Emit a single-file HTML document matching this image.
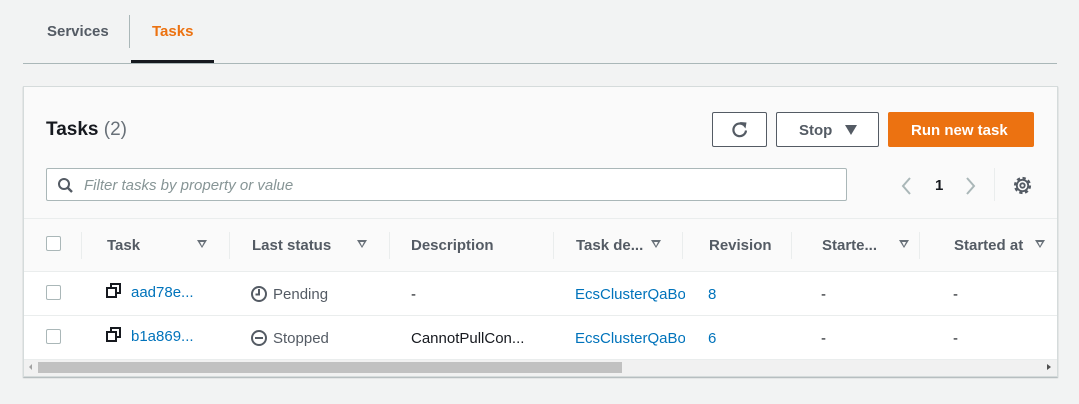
<!DOCTYPE html>
<html><head><style>
*{box-sizing:border-box;margin:0;padding:0}
body{width:1079px;height:404px;background:#f2f3f3;font-family:"Liberation Sans",sans-serif;position:relative;overflow:hidden;color:#16191f}
.a{position:absolute}
.b{font-weight:bold}
.hd{font-size:15px;font-weight:bold;color:#545b64;top:237px}
.tri{width:0;height:0;border-left:5px solid transparent;border-right:5px solid transparent;border-top:8px solid #687078;top:240px}
.tri:after{content:"";position:absolute;left:-2.5px;top:-6.5px;border-left:2.5px solid transparent;border-right:2.5px solid transparent;border-top:4px solid #fafafa}
.vd{width:1px;background:#eaeded;top:232px;height:27px}
.cb{width:15px;height:15px;border:1px solid #aab7b8;border-radius:2px;background:#fff;left:46px}
.lnk{color:#0073bb;font-size:15px}
.tx{font-size:15px}
</style></head><body>
<div class="a b" style="left:47px;top:23px;font-size:15px;color:#545b64">Services</div>
<div class="a" style="left:129px;top:15px;width:1px;height:33px;background:#aab7b8"></div>
<div class="a b" style="left:152px;top:23px;font-size:15px;color:#ec7211">Tasks</div>
<div class="a" style="left:131px;top:60px;width:83px;height:3px;background:#16191f"></div>
<div class="a" style="left:23px;top:63px;width:1034px;height:1px;background:#aab7b8"></div>

<div class="a" style="left:23px;top:86px;width:1035px;height:291px;background:#fafafa;border:1px solid #d5dbdb;box-shadow:0 1px 1px rgba(0,28,36,.3);overflow:hidden">
</div>
<div class="a b" style="left:46px;top:119px;font-size:19px">Tasks <span style="font-weight:normal;color:#687078">(2)</span></div>

<div class="a" style="left:712px;top:112px;width:55px;height:35px;border:1px solid #545b64;border-radius:2px;background:#fff"></div>
<svg class="a" style="left:729px;top:119px" width="22" height="22" viewBox="0 0 22 22"><path d="M17 11.5A6.3 6.3 0 1 1 14.5 5.8" fill="none" stroke="#545b64" stroke-width="2.2"/><path d="M11 3L17.5 3.5L16.5 9.5Z" fill="#545b64"/></svg>
<div class="a" style="left:776px;top:112px;width:103px;height:35px;border:1px solid #545b64;border-radius:2px;background:#fff"></div>
<div class="a b" style="left:799px;top:122px;font-size:15px;color:#545b64">Stop</div>
<div class="a" style="left:845px;top:125px;border-left:6px solid transparent;border-right:6px solid transparent;border-top:10px solid #545b64"></div>
<div class="a" style="left:888px;top:112px;width:146px;height:35px;border-radius:2px;background:#ec7211"></div>
<div class="a b" style="left:911px;top:122px;font-size:15px;color:#fff">Run new task</div>

<div class="a" style="left:46px;top:168px;width:801px;height:33px;border:1px solid #aab7b8;border-radius:2px;background:#fff"></div>
<svg class="a" style="left:57px;top:177px" width="17" height="17" viewBox="0 0 17 17"><circle cx="7" cy="7" r="5" fill="none" stroke="#545b64" stroke-width="2"/><path d="M10.5 10.5L15 15" stroke="#545b64" stroke-width="2.4"/></svg>
<div class="a" style="left:84px;top:177px;font-size:15px;font-style:italic;color:#879596">Filter tasks by property or value</div>

<svg class="a" style="left:900px;top:176px" width="14" height="20" viewBox="0 0 14 20"><path d="M10 2L3 10L10 18" fill="none" stroke="#aab7b8" stroke-width="2"/></svg>
<div class="a b" style="left:935px;top:177px;font-size:15px">1</div>
<svg class="a" style="left:963px;top:176px" width="14" height="20" viewBox="0 0 14 20"><path d="M4 2L11 10L4 18" fill="none" stroke="#aab7b8" stroke-width="2"/></svg>
<div class="a" style="left:994px;top:168px;width:1px;height:33px;background:#eaeded"></div>
<svg class="a" style="left:1012px;top:175px" width="21" height="21" viewBox="0 0 21 21"><circle cx="10.5" cy="10.5" r="7.3" fill="none" stroke="#545b64" stroke-width="2.6" stroke-dasharray="3.2 2.5"/><circle cx="10.5" cy="10.5" r="5.7" fill="none" stroke="#545b64" stroke-width="1.8"/><circle cx="10.5" cy="10.5" r="2.2" fill="none" stroke="#545b64" stroke-width="1.8"/></svg>

<div class="a" style="left:24px;top:218px;width:1033px;height:1px;background:#eaeded"></div>
<div class="a" style="left:24px;top:271px;width:1033px;height:89px;background:#fff"></div>
<div class="a" style="left:24px;top:271px;width:1033px;height:1px;background:#eaeded"></div>
<div class="a" style="left:24px;top:315px;width:1033px;height:1px;background:#eaeded"></div>
<div class="a" style="left:24px;top:359px;width:1033px;height:1px;background:#eaeded"></div>

<div class="a cb" style="top:236px"></div>
<div class="a vd" style="left:81px"></div>
<div class="a hd" style="left:107px">Task</div><div class="a tri" style="left:197px"></div>
<div class="a vd" style="left:229px"></div>
<div class="a hd" style="left:252px">Last status</div><div class="a tri" style="left:357px"></div>
<div class="a vd" style="left:389px"></div>
<div class="a hd" style="left:411px">Description</div>
<div class="a vd" style="left:553px"></div>
<div class="a hd" style="left:576px">Task de...</div><div class="a tri" style="left:651px"></div>
<div class="a vd" style="left:682px"></div>
<div class="a hd" style="left:709px">Revision</div>
<div class="a vd" style="left:791px"></div>
<div class="a hd" style="left:822px">Starte...</div><div class="a tri" style="left:899px"></div>
<div class="a vd" style="left:919px"></div>
<div class="a hd" style="left:954px">Started at</div><div class="a tri" style="left:1035px"></div>

<div class="a cb" style="top:285px"></div>
<div class="a cb" style="top:329px"></div>
<svg class="a" style="left:106px;top:283px" width="16" height="16" viewBox="0 0 16 16"><rect x="1" y="5" width="9" height="9" fill="none" stroke="#16191f" stroke-width="2"/><path d="M5 5V1H14V10H10" fill="none" stroke="#16191f" stroke-width="2"/></svg>
<svg class="a" style="left:106px;top:327px" width="16" height="16" viewBox="0 0 16 16"><rect x="1" y="5" width="9" height="9" fill="none" stroke="#16191f" stroke-width="2"/><path d="M5 5V1H14V10H10" fill="none" stroke="#16191f" stroke-width="2"/></svg>
<div class="a lnk" style="left:131px;top:284px">aad78e...</div>
<div class="a lnk" style="left:131px;top:328px">b1a869...</div>
<svg class="a" style="left:250px;top:285px" width="18" height="18" viewBox="0 0 18 18"><circle cx="9" cy="9" r="7" fill="none" stroke="#545b64" stroke-width="2"/><path d="M9 4V9.5H5.5" fill="none" stroke="#545b64" stroke-width="2"/></svg>
<div class="a tx" style="left:273px;top:286px;color:#545b64">Pending</div>
<svg class="a" style="left:250px;top:329px" width="18" height="18" viewBox="0 0 18 18"><circle cx="9" cy="9" r="7" fill="none" stroke="#545b64" stroke-width="2"/><path d="M5 9H13" stroke="#545b64" stroke-width="2"/></svg>
<div class="a tx" style="left:273px;top:330px;color:#545b64">Stopped</div>
<div class="a tx" style="left:411px;top:286px">-</div>
<div class="a tx" style="left:411px;top:330px">CannotPullCon...</div>
<div class="a lnk" style="left:575px;top:286px;width:110px;overflow:hidden;white-space:nowrap">EcsClusterQaBot</div>
<div class="a lnk" style="left:575px;top:330px;width:110px;overflow:hidden;white-space:nowrap">EcsClusterQaBot</div>
<div class="a lnk" style="left:708px;top:286px">8</div>
<div class="a lnk" style="left:708px;top:330px">6</div>
<div class="a tx" style="left:821px;top:286px">-</div>
<div class="a tx" style="left:821px;top:330px">-</div>
<div class="a tx" style="left:953px;top:286px">-</div>
<div class="a tx" style="left:953px;top:330px">-</div>

<div class="a" style="left:24px;top:360px;width:1033px;height:16px;background:#f1f1f1"></div>
<div class="a" style="left:38px;top:362px;width:584px;height:11px;background:#c1c1c1"></div>
<div class="a" style="left:29px;top:364px;border-top:3px solid transparent;border-bottom:3px solid transparent;border-right:3px solid #a3a3a3"></div>
<div class="a" style="left:1047px;top:364px;border-top:3.5px solid transparent;border-bottom:3.5px solid transparent;border-left:4px solid #505050"></div>
</body></html>
